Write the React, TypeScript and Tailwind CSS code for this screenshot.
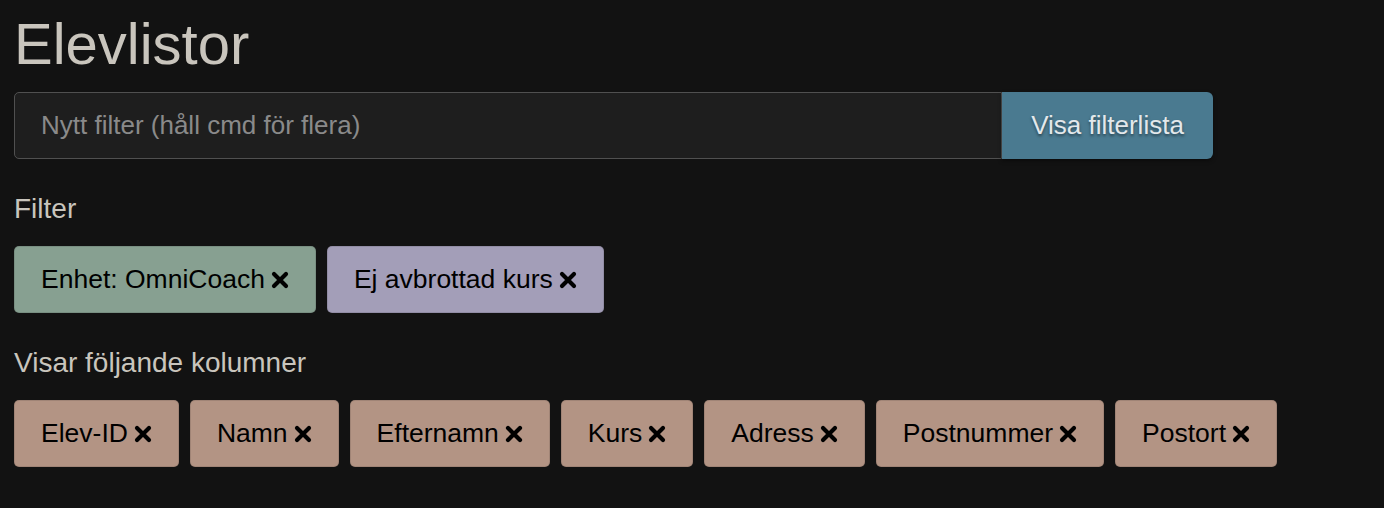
const filters = [
  { label: "Enhet: OmniCoach", color: "bg-[#87a091]" },
  { label: "Ej avbrottad kurs", color: "bg-[#a39eb8]" },
];

const columns = ["Elev-ID", "Namn", "Efternamn", "Kurs", "Adress", "Postnummer", "Postort"];

// Tjockt kryss, som fa-times
const Cross = () => (
  <svg viewBox="0 0 18 18" className="ml-[6px] h-[18px] w-[18px]" fill="none">
    <path d="M3 3L15 15M15 3L3 15" stroke="black" strokeWidth="4.2" strokeLinecap="round" />
  </svg>
);

const Chip = ({ label, color }: { label: string; color: string }) => (
  <div
    className={`${color} flex h-[67px] items-center rounded-[5px] border border-black/10 pl-[26px] pr-[26px] text-[26.5px] text-black`}
  >
    <span>{label}</span>
    <Cross />
  </div>
);

export default function App() {
  return (
    <div
      className="min-h-screen bg-[#121212] px-[14px] pt-[8px] text-[#c9c5bd]"
      style={{ fontFamily: '"Liberation Sans", sans-serif' }}
    >
      {/* Rubrik */}
      <h1 className="text-[58px] leading-[72px]">Elevlistor</h1>

      {/* Sökfält och knapp */}
      <div className="mt-[12px] flex h-[67px]">
        <input
          className="h-full w-[988px] rounded-l-[5px] border border-[#505050] bg-[#1e1e1e] px-[26px] text-[26px] text-[#ccc] outline-none placeholder:text-[#8a8a8a]"
          placeholder="Nytt filter (håll cmd för flera)"
        />
        <button className="h-full w-[211px] rounded-r-[6px] bg-[#4a7a90] text-[26px] text-[#e3e8eb] shadow-[0_2px_4px_rgba(0,0,0,0.4)] [text-shadow:0_2px_3px_rgba(0,0,0,0.45)]">
          Visa filterlista
        </button>
      </div>

      {/* Filter */}
      <div className="mt-[33px] text-[28px] leading-[34px]">Filter</div>
      <div className="mt-[20px] flex gap-[11px]">
        {filters.map((f) => (
          <Chip key={f.label} label={f.label} color={f.color} />
        ))}
      </div>

      {/* Kolumner */}
      <div className="mt-[33px] text-[28px] leading-[34px]">Visar följande kolumner</div>
      <div className="mt-[20px] flex gap-[11px]">
        {columns.map((c) => (
          <Chip key={c} label={c} color="bg-[#b39484]" />
        ))}
      </div>
    </div>
  );
}
